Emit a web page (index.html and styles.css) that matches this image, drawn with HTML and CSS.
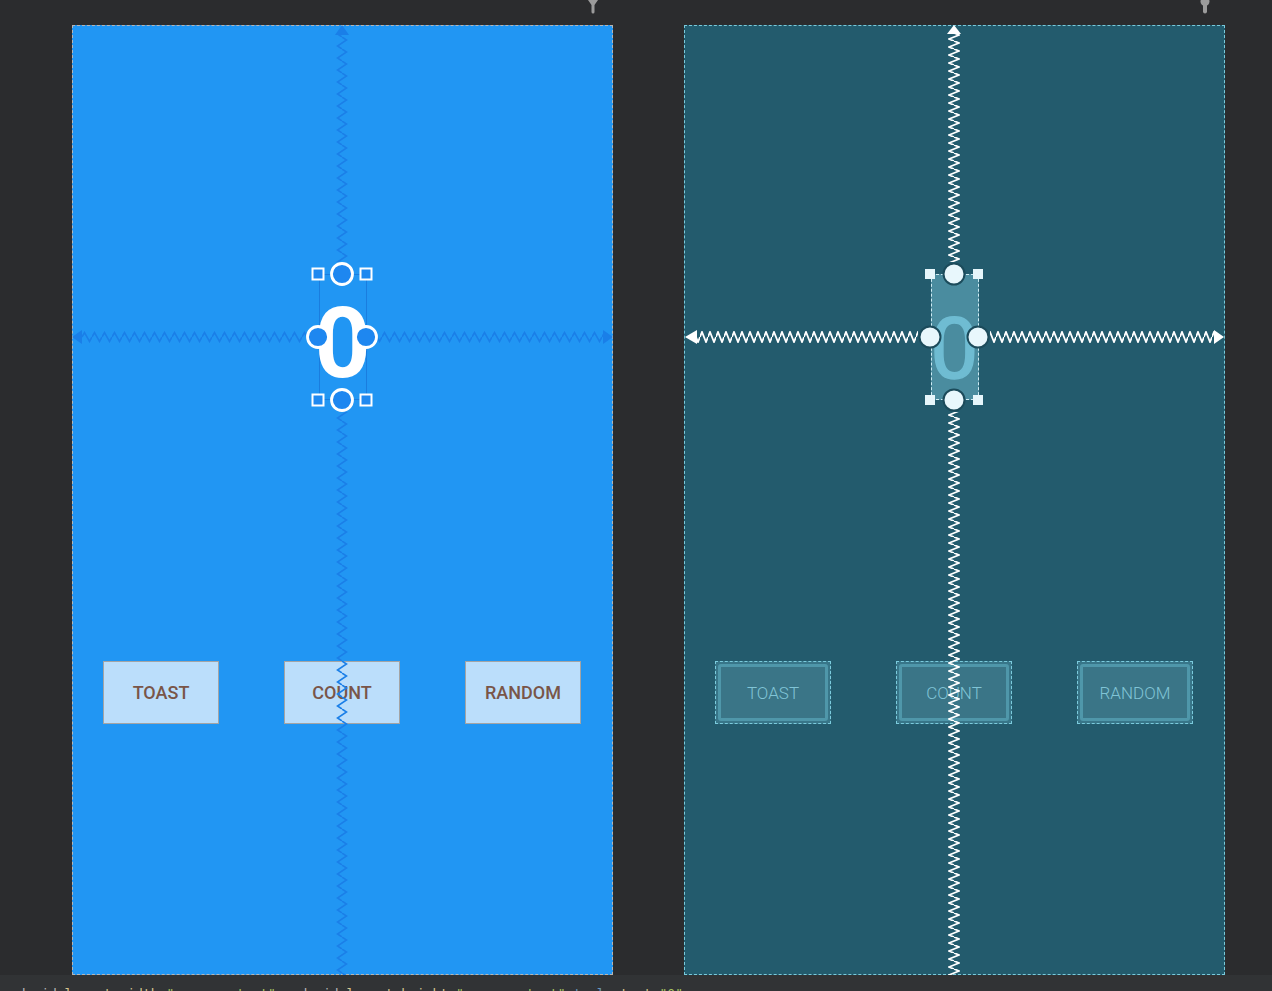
FILE: index.html
```html
<!DOCTYPE html>
<html>
<head>
<meta charset="utf-8">
<title>Layout editor</title>
<link rel="stylesheet" href="styles.css">
</head>
<body>
<div class="canvas">
  <div class="panel design">
    <svg class="pin" width="12" height="14" viewBox="0 0 12 14"><path d="M1 0 H11 L7.5 5 V12 a1.5 1.5 0 0 1 -3 0 V5 Z" fill="#9b9b9b"/></svg>
    <div class="textview tv-design"><span class="digit">0</span></div>
    <div class="buttons">
      <div class="btn btn-design">TOAST</div>
      <div class="btn btn-design">COUNT</div>
      <div class="btn btn-design">RANDOM</div>
    </div>
    <svg class="overlay" width="541" height="950" viewBox="0 0 541 950">
      <defs>
        <pattern id="dv" patternUnits="userSpaceOnUse" x="264" y="0" width="12" height="12">
          <polyline points="6,0 10.5,3 1.5,9 6,12" fill="none" stroke="#1a7fe8" stroke-width="1.6"/>
        </pattern>
        <pattern id="dh" patternUnits="userSpaceOnUse" x="0" y="306" width="10" height="12">
          <polyline points="0,6 2.5,1.5 7.5,10.5 10,6" fill="none" stroke="#1a7fe8" stroke-width="1.6"/>
        </pattern>
      </defs>
      <rect x="264" y="9" width="12" height="228" fill="url(#dv)"/>
      <rect x="264" y="387" width="12" height="563" fill="url(#dv)"/>
      <rect x="9" y="306" width="225" height="12" fill="url(#dh)"/>
      <rect x="306" y="306" width="226" height="12" fill="url(#dh)"/>
      <polygon points="270,0 263,10 277,10" fill="#1a7fe8"/>
      <polygon points="0,312 10,305 10,319" fill="#1a7fe8"/>
      <polygon points="541,312 531,305 531,319" fill="#1a7fe8"/>
      <g fill="#1f89f0" stroke="#ffffff" stroke-width="2">
        <rect x="240.5" y="243.5" width="11" height="11"/>
        <rect x="288.5" y="243.5" width="11" height="11"/>
        <rect x="240.5" y="369.5" width="11" height="11"/>
        <rect x="288.5" y="369.5" width="11" height="11"/>
      </g>
      <g fill="#1e87f0" stroke="#ffffff" stroke-width="2.8">
        <circle cx="270" cy="249" r="10.5"/>
        <circle cx="270" cy="375" r="10.5"/>
        <circle cx="246" cy="312" r="10.5"/>
        <circle cx="294" cy="312" r="10.5"/>
      </g>
    </svg>
  </div>

  <div class="panel blueprint">
    <svg class="pin" width="12" height="14" viewBox="0 0 12 14"><circle cx="6" cy="1.5" r="4.5" fill="#9b9b9b"/><rect x="4" y="3" width="4" height="10.5" rx="2" fill="#9b9b9b"/></svg>
    <div class="textview tv-blueprint"><span class="digit">0</span></div>
    <div class="buttons">
      <div class="bp-btn"><div class="bp-inner">TOAST</div></div>
      <div class="bp-btn"><div class="bp-inner">COUNT</div></div>
      <div class="bp-btn"><div class="bp-inner">RANDOM</div></div>
    </div>
    <svg class="overlay" width="541" height="950" viewBox="0 0 541 950">
      <defs>
        <pattern id="bv" patternUnits="userSpaceOnUse" x="264" y="0" width="12" height="8">
          <polyline points="6,0 11,2 1,6 6,8" fill="none" stroke="#ffffff" stroke-width="1.8"/>
        </pattern>
        <pattern id="bh" patternUnits="userSpaceOnUse" x="0" y="306" width="8" height="12">
          <polyline points="0,6 2,1 6,11 8,6" fill="none" stroke="#ffffff" stroke-width="1.8"/>
        </pattern>
      </defs>
      <rect x="264" y="9" width="12" height="228" fill="url(#bv)"/>
      <rect x="264" y="387" width="12" height="563" fill="url(#bv)"/>
      <rect x="12" y="306" width="222" height="12" fill="url(#bh)"/>
      <rect x="306" y="306" width="224" height="12" fill="url(#bh)"/>
      <polygon points="270,0 263,9 277,9" fill="#ffffff"/>
      <polygon points="1,312 13,305 13,319" fill="#ffffff"/>
      <polygon points="540,312 530,305 530,319" fill="#ffffff"/>
      <g fill="#e6f6fb">
        <rect x="241" y="244" width="10" height="10"/>
        <rect x="289" y="244" width="10" height="10"/>
        <rect x="241" y="370" width="10" height="10"/>
        <rect x="289" y="370" width="10" height="10"/>
      </g>
      <g fill="#e8f7fc" stroke="#1c4b5b" stroke-width="2">
        <circle cx="270" cy="249" r="10.5"/>
        <circle cx="270" cy="375" r="10.5"/>
        <circle cx="246" cy="312" r="10.5"/>
        <circle cx="294" cy="312" r="10.5"/>
      </g>
    </svg>
  </div>
</div>
<div class="status"><span class="code"><span class="c-a">android</span><span class="c-b">:layout_width=</span><span class="c-s">"wrap_content"</span> <span class="c-a">android</span><span class="c-b">:layout_height=</span><span class="c-s">"wrap_content"</span> <span class="c-t">tools</span><span class="c-b">:text=</span><span class="c-s">"0"</span></span></div>
</body>
</html>
```

FILE: styles.css
```css
* { box-sizing: border-box; }
html, body { margin: 0; padding: 0; }
body {
  background: #2b2c2e;
  width: 1272px;
  height: 991px;
  overflow: hidden;
  font-family: Roboto, "Liberation Sans", sans-serif;
}
.canvas {
  height: 975px;
  display: flex;
  gap: 71px;
  padding: 25px 0 0 72px;
}
.panel {
  position: relative;
  width: 541px;
  height: 950px;
  padding-top: 248px;
  display: flex;
  flex-direction: column;
  align-items: center;
}
.design { background: #2196f3; border: 1px dashed #b5b5b5; }
.blueprint { background: #235b6d; border: 1px dashed #79cbdc; }

.pin { position: absolute; top: -26px; right: 13px; }

.overlay { position: absolute; top: -1px; left: -1px; }

.textview {
  width: 48px;
  height: 126px;
  display: flex;
  justify-content: center;
  align-items: flex-start;
  flex: none;
}
.tv-design { border: 1px solid #1a7ddf; }
.tv-design .digit {
  font-size: 98px;
  font-weight: 700;
  line-height: 137px;
  color: #ffffff;
}
.tv-blueprint { background: #4a8c9f; border: 1px dashed #cdebf3; }
.tv-blueprint .digit {
  font-size: 86px;
  font-weight: 400;
  line-height: 147px;
  color: #6fbcd2;
  -webkit-text-stroke: 1.5px #6fbcd2;
}

.buttons {
  margin-top: 261px;
  width: 100%;
  display: flex;
  justify-content: space-between;
  padding: 0 31px 0 30px;
}
.btn {
  width: 116px;
  height: 63px;
  display: flex;
  align-items: center;
  justify-content: center;
  font-size: 18px;
  font-weight: 500;
}
.btn-design {
  background: #bbdefb;
  border: 1px solid #a4a4a4;
  color: #795548;
}
.bp-btn {
  width: 116px;
  height: 63px;
  border: 1px dashed #7bcbdd;
  background: #387689;
  padding: 2px;
}
.bp-inner {
  height: 100%;
  border: 3px solid #4f97aa;
  border-radius: 3px;
  background: #3a7587;
  display: flex;
  align-items: center;
  justify-content: center;
  font-size: 17px;
  font-weight: 300;
  color: #80c4d6;
}

.status {
  height: 16px;
  background: #313335;
  overflow: hidden;
  padding: 12px 0 0 2px;
  font-family: "DejaVu Sans Mono", "Liberation Mono", monospace;
  font-size: 13px;
  line-height: 14px;
  white-space: nowrap;
}
.c-a { color: #bababa; }
.c-b { color: #d6c58f; }
.c-s { color: #a5c261; }
.c-t { color: #6897bb; }
```
